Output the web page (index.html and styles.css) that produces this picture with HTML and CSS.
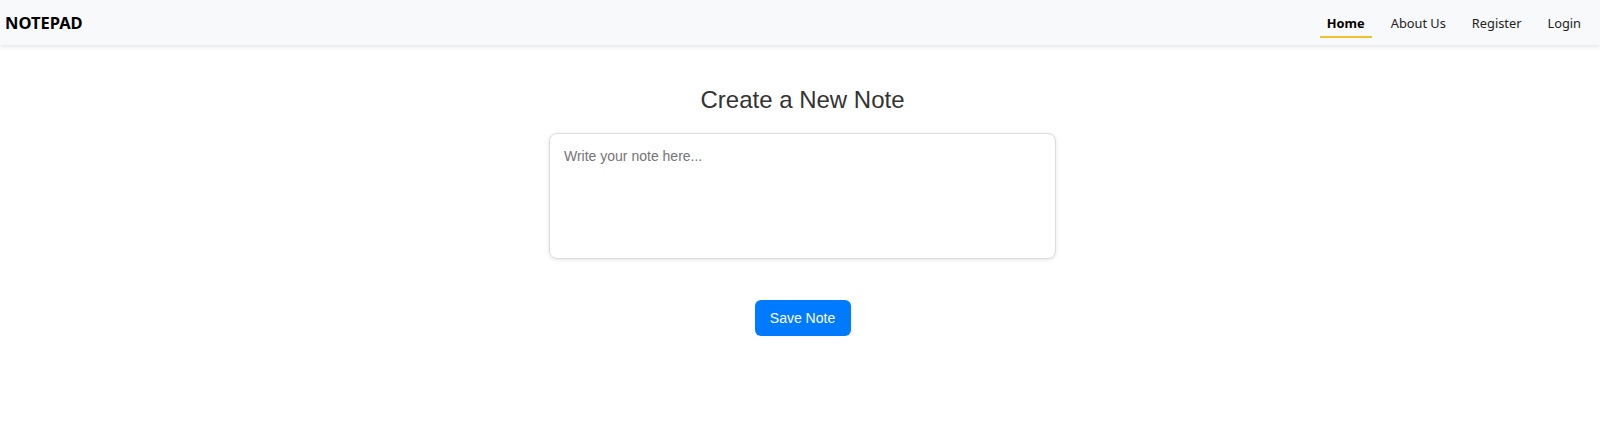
FILE: index.html
```html
<!DOCTYPE html>
<html lang="en">
<head>
<meta charset="utf-8">
<title>Notepad</title>
<link rel="stylesheet" href="styles.css">
</head>
<body>
<header class="navbar">
  <div class="brand">NOTEPAD</div>
  <nav class="nav">
    <a class="nav-link active" href="#">Home</a>
    <a class="nav-link" href="#">About Us</a>
    <a class="nav-link" href="#">Register</a>
    <a class="nav-link" href="#">Login</a>
  </nav>
</header>
<main class="main">
  <h1 class="title">Create a New Note</h1>
  <textarea class="note" placeholder="Write your note here..."></textarea>
  <button class="save">Save Note</button>
</main>
</body>
</html>
```
FILE: styles.css
```css
* { box-sizing: border-box; }
html, body { margin: 0; padding: 0; background: #fff; }
body { font-family: "Liberation Sans", Arial, sans-serif; }

.navbar {
  height: 45px;
  background: #f8f9fa;
  box-shadow: 0 2px 4px rgba(0,0,0,0.1);
  display: flex;
  align-items: center;
  justify-content: space-between;
  padding: 0 6px 0 5px;
}
.brand {
  font-family: "Noto Sans", "Open Sans", sans-serif;
  font-weight: 700;
  font-size: 16.5px;
  color: #000;
}
.nav { display: flex; height: 100%; }
.nav-link {
  font-family: "Noto Sans", "Open Sans", sans-serif;
  font-size: 12.8px;
  color: #222;
  text-decoration: none;
  padding: 0 13px;
  display: flex;
  align-items: center;
  height: 100%;
  position: relative;
}
.nav-link.active { font-weight: 700; color: #000; padding: 0 7px; margin: 0 6px; }
.nav-link.active::after {
  content: "";
  position: absolute;
  left: 0; right: 0;
  bottom: 7px;
  height: 2px;
  background: #f2c02b;
}

.main {
  display: flex;
  flex-direction: column;
  align-items: center;
  padding-left: 5px;
}
.title {
  margin: 41px 0 0;
  font-size: 24px;
  font-weight: 400;
  color: #333;
  line-height: 28px;
}
.note {
  margin-top: 19px;
  width: 507px;
  height: 126px;
  padding: 14px 14px;
  border: 1px solid #ddd;
  border-radius: 8px;
  box-shadow: 0 1px 4px rgba(0,0,0,0.1);
  font-family: "Liberation Sans", Arial, sans-serif;
  font-size: 14px;
  resize: none;
  outline: none;
}
.note::placeholder { color: #757575; }
.save {
  margin-top: 41px;
  width: 96px;
  height: 36px;
  border: none;
  border-radius: 6px;
  background: #007bff;
  color: #fff;
  font-family: "Liberation Sans", Arial, sans-serif;
  font-size: 14px;
}
```
